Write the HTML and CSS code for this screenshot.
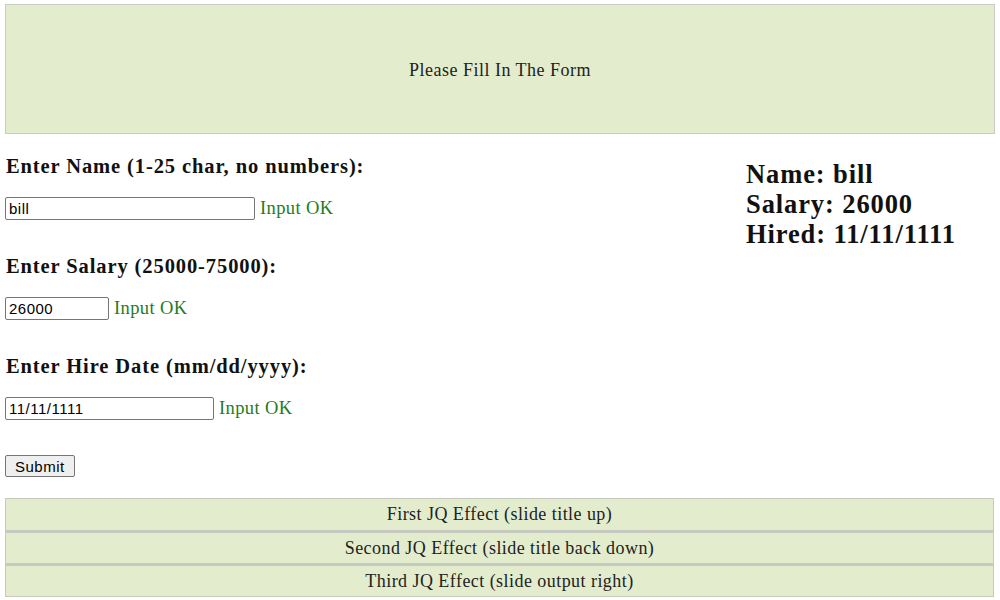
FILE: index.html
```html
<!DOCTYPE html>
<html>
<head>
<meta charset="utf-8">
<link rel="stylesheet" href="styles.css">
</head>
<body>
<div class="title">Please Fill In The Form</div>
<div class="main">
  <form class="form">
    <div class="group">
      <h3 class="label">Enter Name (1-25 char, no numbers):</h3>
      <div class="row"><input class="inp w-name" type="text" value="bill"><span class="ok">Input OK</span></div>
    </div>
    <div class="group">
      <h3 class="label">Enter Salary (25000-75000):</h3>
      <div class="row"><input class="inp w-sal" type="text" value="26000"><span class="ok">Input OK</span></div>
    </div>
    <div class="group">
      <h3 class="label">Enter Hire Date (mm/dd/yyyy):</h3>
      <div class="row"><input class="inp w-date" type="text" value="11/11/1111"><span class="ok">Input OK</span></div>
    </div>
    <button class="submit" type="button">Submit</button>
  </form>
  <div class="output">
    <div>Name: bill</div>
    <div>Salary: 26000</div>
    <div>Hired: 11/11/1111</div>
  </div>
</div>
<div class="effects">
  <div class="effect">First JQ Effect (slide title up)</div>
  <div class="effect">Second JQ Effect (slide title back down)</div>
  <div class="effect">Third JQ Effect (slide output right)</div>
</div>
</body>
</html>
```
FILE: styles.css
```css
html, body {
  margin: 0;
  padding: 0;
  background: #fff;
}
body {
  padding: 4px 5px 0 5px;
  font-family: "Liberation Serif", "Times New Roman", serif;
  color: #111;
}
.title {
  box-sizing: border-box;
  height: 130px;
  padding-top: 2px;
  border: 1px solid #c9ccc4;
  background: #e3edcd;
  display: flex;
  align-items: center;
  justify-content: center;
  font-size: 18px;
  letter-spacing: 0.5px;
  color: #222;
}
.main {
  display: flex;
  justify-content: space-between;
}
.form {
  display: flex;
  flex-direction: column;
  align-items: flex-start;
  padding-top: 20px;
}
.group {
  height: 100px;
}
.label {
  margin: 0;
  font-size: 20.5px;
  letter-spacing: 0.9px;
  font-weight: bold;
  line-height: 24px;
  padding-left: 1px;
}
.row {
  margin-top: 19px;
  display: flex;
  align-items: center;
}
.inp {
  box-sizing: border-box;
  height: 23px;
  margin: 0;
  padding: 1px 3px;
  border: 1px solid #767676;
  border-radius: 2px;
  font-family: "Liberation Sans", Arial, sans-serif;
  font-size: 15px;
  letter-spacing: 0.5px;
  color: #000;
}
.w-name { width: 250px; }
.w-sal { width: 104px; }
.w-date { width: 209px; }
.ok {
  margin-left: 5px;
  color: #237b23;
  font-size: 18.5px;
  letter-spacing: 0.4px;
}
.submit {
  margin-top: 1px;
  box-sizing: border-box;
  height: 22px;
  padding: 1px 9px;
  font-family: "Liberation Sans", Arial, sans-serif;
  font-size: 15px;
  letter-spacing: 0.5px;
  color: #000;
  background: #efefef;
  border: 1px solid #767676;
  border-radius: 2px;
}
.output {
  width: 249px;
  padding-top: 25px;
  font-size: 26.5px;
  letter-spacing: 0.9px;
  font-weight: bold;
  line-height: 30px;
}
.effects {
  margin-top: 21px;
  width: 989px;
}
.effect {
  height: 31px;
  border: 1px solid #c6c9c0;
  border-top-width: 0;
  background: #e3edcd;
  display: flex;
  align-items: center;
  justify-content: center;
  font-size: 18px;
  letter-spacing: 0.45px;
  color: #222;
}
.effect:first-child {
  border-top-width: 1px;
}
.effect + .effect {
  border-top: 2px solid #c6c9c0;
  height: 30px;
}
```
